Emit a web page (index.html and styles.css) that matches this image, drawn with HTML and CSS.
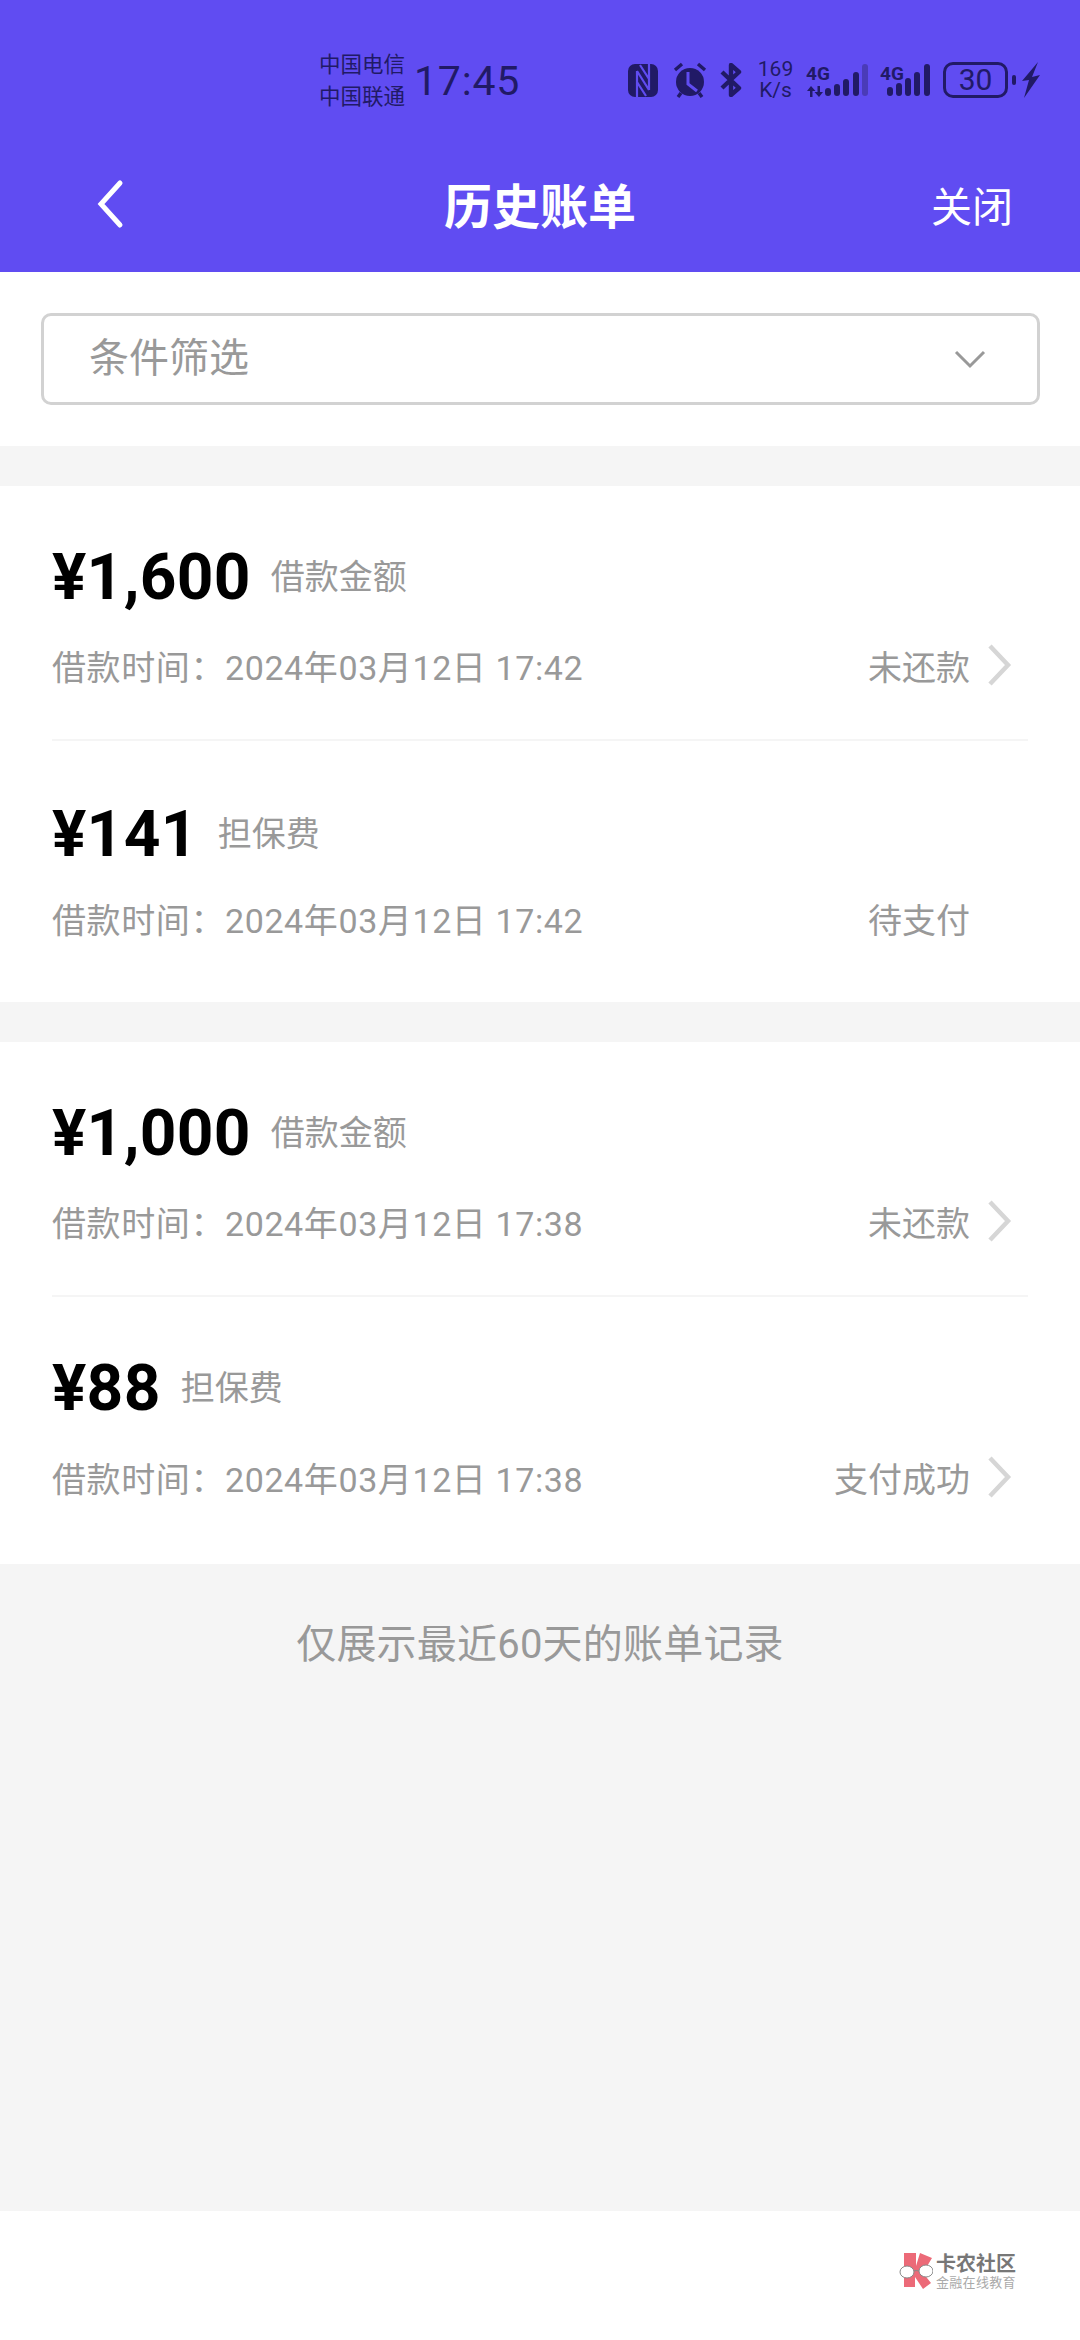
FILE: index.html
```html
<!DOCTYPE html>
<html lang="zh-CN">
  <head>
    <meta charset="UTF-8" />
    <meta name="viewport" content="width=device-width, initial-scale=1.0" />
    <title>历史账单</title>
    <link rel="icon" href="data:," />
    <link rel="stylesheet" href="styles.css">
  </head>
  <body>
    <header class="top">
      <div class="status">
        <div class="carrier">
          <span>中国电信</span>
          <span>中国联通</span>
        </div>
        <div class="clock">17:45</div>
        <div class="status-icons">
          <svg class="ic-nfc" width="30" height="33" viewBox="0 0 30 33">
            <rect width="30" height="33" rx="7" fill="#211a66" />
            <path d="M9 7v26M21 0v26M9 7l12 19M12 1l9 14M9 18l9 14" stroke="#604cf2" stroke-width="2.2" fill="none" />
          </svg>
          <svg class="ic-alarm" width="36" height="36" viewBox="0 0 36 36">
            <circle cx="18" cy="20" r="14" fill="#211a66" />
            <path d="M16 10v12l9 7" stroke="#604cf2" stroke-width="3" fill="none" />
            <path d="M3 8l7-6M33 8l-7-6M9 31l-3 4M27 31l3 4" stroke="#211a66" stroke-width="3.4" fill="none" />
          </svg>
          <svg class="ic-bt" width="23" height="34" viewBox="0 0 23 34">
            <path d="M2 9l17 16-8 7V2l8 7L2 25" stroke="#211a66" stroke-width="4.4" fill="none" stroke-linejoin="round" />
          </svg>
          <div class="speed">
            <span>169</span>
            <span>K/s</span>
          </div>
          <svg class="ic-sig" width="62" height="36" viewBox="0 0 62 36">
            <text x="0" y="18" class="sig-label">4G</text>
            <path d="M5 24l-4 5h3v6h2.500v-6h3zM13 35l4-5h-3v-6h-2.500v6h-3z" fill="#211a66" />
            <path d="M22 29v2M31 25v6M40 20v11M50 13v18" stroke="#211a66" stroke-width="6" stroke-linecap="round" />
            <path d="M59 5v26" stroke="#4a3bb8" stroke-width="6" stroke-linecap="round" />
          </svg>
          <svg class="ic-sig2" width="50" height="36" viewBox="0 0 50 36">
            <text x="0" y="18" class="sig-label">4G</text>
            <path d="M10 28v3M19 24v7M28 19v12M37 13v18M47 5v26" stroke="#211a66" stroke-width="6" stroke-linecap="round" />
          </svg>
          <div class="battery">30</div>
          <div class="battery-tip"></div>
          <svg class="ic-bolt" width="20" height="36" viewBox="0 0 20 36">
            <path d="M17 0L1 19l7-1-5 18L19 13l-8 2z" fill="#211a66" />
          </svg>
        </div>
      </div>
      <nav class="nav">
        <svg class="back" width="30" height="50" viewBox="0 0 30 50">
          <path d="M25 4L6 25l19 21" stroke="#fff" stroke-width="5" fill="none" stroke-linecap="round" />
        </svg>
        <h1 class="title">历史账单</h1>
        <div class="close">关闭</div>
      </nav>
    </header>

    <section class="filter-wrap">
      <div class="filter">
        <span class="filter-label">条件筛选</span>
        <svg width="32" height="20" viewBox="0 0 32 20">
          <path d="M2 3l14 14L30 3" stroke="#999" stroke-width="3" fill="none" />
        </svg>
      </div>
    </section>

    <section class="card">
      <div class="entry first">
        <div class="amount-row">
          <span class="amount">¥1,600</span>
          <span class="kind">借款金额</span>
        </div>
        <div class="meta-row">
          <span>借款时间：2024年03月12日 17:42</span>
          <span class="state">未还款
            <svg class="chev" width="26" height="44" viewBox="0 0 26 44"><path d="M4 3l18 19L4 41" stroke="#d6d6d6" stroke-width="4.500" fill="none" /></svg>
          </span>
        </div>
      </div>
      <div class="entry second">
        <div class="amount-row">
          <span class="amount">¥141</span>
          <span class="kind">担保费</span>
        </div>
        <div class="meta-row">
          <span>借款时间：2024年03月12日 17:42</span>
          <span class="state">待支付<span class="chev-gap"></span></span>
        </div>
      </div>
    </section>

    <section class="card">
      <div class="entry first">
        <div class="amount-row">
          <span class="amount">¥1,000</span>
          <span class="kind">借款金额</span>
        </div>
        <div class="meta-row">
          <span>借款时间：2024年03月12日 17:38</span>
          <span class="state">未还款
            <svg class="chev" width="26" height="44" viewBox="0 0 26 44"><path d="M4 3l18 19L4 41" stroke="#d6d6d6" stroke-width="4.500" fill="none" /></svg>
          </span>
        </div>
      </div>
      <div class="entry last">
        <div class="amount-row">
          <span class="amount">¥88</span>
          <span class="kind">担保费</span>
        </div>
        <div class="meta-row">
          <span>借款时间：2024年03月12日 17:38</span>
          <span class="state">支付成功
            <svg class="chev" width="26" height="44" viewBox="0 0 26 44"><path d="M4 3l18 19L4 41" stroke="#d6d6d6" stroke-width="4.500" fill="none" /></svg>
          </span>
        </div>
      </div>
    </section>

    <main class="rest">
      <p class="note">仅展示最近60天的账单记录</p>
    </main>

    <footer class="foot">
      <svg class="logo" width="34" height="36" viewBox="0 0 34 36">
        <path d="M5 0h12v13L21 0l12 5-9 15 8 10-8 6-8-12v10H5z" fill="#ec6a78" />
        <ellipse cx="8" cy="19" rx="7" ry="6" fill="#fff" stroke="#888" stroke-width="1" />
        <ellipse cx="27" cy="18" rx="7" ry="6" fill="#fff" stroke="#888" stroke-width="1" />
        <path d="M15 18q2-1 5 0" stroke="#888" stroke-width="1" fill="none" />
      </svg>
      <div class="brand">
        <span class="brand-name">卡农社区</span>
        <span class="brand-sub">金融在线教育</span>
      </div>
    </footer>
  </body>
</html>
```

FILE: styles.css
```css
* {
  box-sizing: border-box;
}

body {
  margin: 0;
  width: 1080px;
  height: 2340px;
  display: flex;
  flex-direction: column;
  background: #f5f5f5;
  font-family: Roboto, "Noto Sans CJK SC", sans-serif;
  color: #999;
}

.top {
  height: 272px;
  background: #604cf2;
  color: #211a66;
}

.status {
  height: 150px;
  padding: 46px 39px 0 319px;
  display: flex;
  align-items: flex-start;
}

.carrier {
  display: flex;
  flex-direction: column;
  margin-top: 3px;
  font-size: 21.5px;
  line-height: 32px;
}

.clock {
  margin: 1px 0 0 9px;
  font-size: 41px;
  line-height: 68px;
  letter-spacing: 0.8px;
}

.status-icons {
  margin-left: auto;
  display: flex;
  align-items: center;
  height: 68px;
}

.ic-nfc {
  margin-right: 14px;
}

.ic-alarm {
  margin-right: 12px;
}

.ic-bt {
  margin-right: 14px;
}

.speed {
  display: flex;
  flex-direction: column;
  align-items: center;
  width: 37px;
  margin-right: 12px;
  font-size: 21px;
  line-height: 21px;
}

.ic-sig {
  margin-right: 12px;
}

.ic-sig2 {
  margin-right: 13px;
}

.sig-label {
  font-size: 19px;
  font-weight: 700;
  fill: #211a66;
}

.battery {
  width: 65px;
  height: 36px;
  border: 3px solid #211a66;
  border-radius: 10px;
  text-align: center;
  font-size: 30px;
  line-height: 30px;
}

.battery-tip {
  width: 4px;
  height: 10px;
  margin: 0 5px 0 4px;
  background: #211a66;
  border-radius: 2px;
}

.nav {
  height: 122px;
  padding: 0 67px 8px 95px;
  display: flex;
  align-items: center;
  justify-content: space-between;
  color: #fff;
}

.back {
  margin-bottom: 6px;
}

.title {
  margin: 0 0 8px 24px;
  font-size: 48px;
  font-weight: 700;
}

.close {
  margin-bottom: 6px;
  font-size: 41px;
}

.filter-wrap {
  height: 174px;
  padding: 41px 40px 0 41px;
  background: #fff;
}

.filter {
  height: 92px;
  padding: 0 51px 0 45px;
  display: flex;
  align-items: center;
  justify-content: space-between;
  border: 3px solid #d2d2d2;
  border-radius: 10px;
  font-size: 40px;
}

.filter-label {
  margin-bottom: 8px;
}

.card {
  margin-top: 40px;
  padding: 0 52px;
  background: #fff;
}

.entry.first {
  height: 255px;
  padding-top: 51px;
  border-bottom: 2px solid #f5f5f5;
}

.entry.second {
  height: 261px;
  padding-top: 53px;
}

.entry.second .meta-row {
  margin-top: 19px;
}

.entry.last {
  height: 267px;
  padding-top: 51px;
}

.entry.last .meta-row {
  margin-top: 24px;
}

.amount-row {
  height: 80px;
  display: flex;
  align-items: center;
}

.amount {
  margin-right: 20px;
  font-size: 64px;
  font-weight: 700;
  letter-spacing: 0.3px;
  color: #000;
}

.kind {
  margin-bottom: 6px;
  font-size: 34px;
}

.meta-row {
  height: 50px;
  margin-top: 23px;
  padding-right: 16px;
  display: flex;
  align-items: center;
  justify-content: space-between;
  font-size: 34px;
  letter-spacing: 0.6px;
}

.state {
  display: flex;
  align-items: center;
  letter-spacing: 0;
}

.chev {
  margin-left: 16px;
}

.chev-gap {
  width: 42px;
}

.rest {
  flex: 1;
}

.note {
  margin: 58px 0 0;
  text-align: center;
  font-size: 40px;
  line-height: 46px;
  letter-spacing: 0.2px;
}

.foot {
  height: 129px;
  padding: 42px 64px 0 0;
  background: #fff;
  display: flex;
  justify-content: flex-end;
  align-items: flex-start;
}

.brand {
  display: flex;
  flex-direction: column;
  margin-left: 3px;
  width: 80px;
}

.brand-name {
  font-size: 20px;
  line-height: 23px;
  font-weight: 700;
  color: #777;
}

.brand-sub {
  font-size: 13px;
  line-height: 14px;
  letter-spacing: 0.3px;
  color: #aaa;
  white-space: nowrap;
}
```
